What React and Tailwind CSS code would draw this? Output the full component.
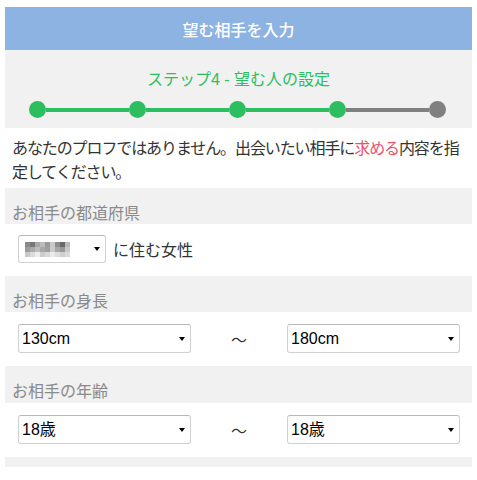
import React from "react";

const jp = { fontFamily: '"Noto Sans CJK JP", "Noto Sans", sans-serif' };
const num = { fontFamily: '"Liberation Sans", "Noto Sans CJK JP", sans-serif' };

// censored prefecture name, shown as a mosaic
const mosaic = [
  ["#8a8a8a", "#777", "#a9a9a9", "#bcbcbc", "#9a9a9a", "#c8c8c8", "#8c8c8c", "#6a6a6a", "#b8b8b8"],
  ["#9c9c9c", "#ababab", "#bdbdbd", "#a8a8a8", "#9e9e9e", "#cacaca", "#a6a6a6", "#999", "#c9c9c9"],
  ["#c9c9c9", "#dadada", "#ececec", "#cdcdcd", "#d8d8d8", "#ebebeb", "#dcdcdc", "#cfcfcf", "#dadada"],
];

const steps = [true, true, true, true, false];

const Arrow = () => (
  <span className="pointer-events-none absolute right-[5px] top-1/2 -translate-y-1/2 w-0 h-0 border-l-[3.5px] border-r-[3.5px] border-t-[4px] border-l-transparent border-r-transparent border-t-black"></span>
);

const SelectBox = ({ value, className = "" }) => (
  <div className={`relative h-[29px] bg-white border border-[#d0d0d0] border-t-[#b8b8b8] rounded-[3px] flex items-center pl-[3px] ${className}`}>
    <span className="text-[16px] text-black leading-none" style={num}>
      {value}
    </span>
    <Arrow />
  </div>
);

const Band = ({ children, className = "h-[36px]" }) => (
  <div className={`bg-[#f1f1f1] px-[7px] pt-3 leading-6 text-[16px] text-[#8a8a8a] ${className}`}>
    {children}
  </div>
);

const RangeRow = ({ from, to }) => (
  <div className="grid grid-cols-[173px_1fr_173px] pl-[13px] pr-[12px] pt-[12px] h-[54px]">
    <SelectBox value={from} />
    <div className="flex items-center justify-center h-[29px] text-[16px] text-[#333]" style={jp}>
      〜
    </div>
    <SelectBox value={to} />
  </div>
);

export default function App() {
  return (
    <div className="w-[477px] h-[480px] bg-white px-[5px] pt-[7px]" style={jp}>
      {/* header */}
      <div className="h-[43px] bg-[#8db3e2] flex items-center justify-center text-white text-[16px] font-medium">
        望む相手を入力
      </div>

      {/* step progress */}
      <div className="bg-[#f1f1f1] h-[78px] pt-[16px]">
        <div className="text-center text-[16px] leading-6 text-[#2dbe60]">
          ステップ<span style={num}>4 - </span>望む人の設定
        </div>
        <div className="flex items-center ml-[24px] mr-[26px] mt-[9px]">
          {steps.map((done, i) => (
            <React.Fragment key={i}>
              {i > 0 && (
                <div className={`flex-1 h-[4px] ${done ? "bg-[#2dbe60]" : "bg-[#808080]"}`}></div>
              )}
              <div className={`w-[17px] h-[17px] rounded-full shrink-0 ${done ? "bg-[#2dbe60]" : "bg-[#808080]"}`}></div>
            </React.Fragment>
          ))}
        </div>
      </div>

      {/* note */}
      <p className="pl-[7px] pt-[7px] pb-[5px] text-[16px] leading-6 text-[#333] tracking-[-1.1px]">
        <span className="whitespace-nowrap">
          あなたのプロフではありません。出会いたい相手に<span className="text-[#f0506e]">求める</span>内容を指
        </span>
        <br />
        定してください。
      </p>

      <Band>お相手の都道府県</Band>
      <div className="h-[52px] pl-[13px] pt-[11px] flex items-start gap-[7px]">
        <div className="relative w-[88px] h-[28px] bg-white border border-[#d0d0d0] border-t-[#b8b8b8] rounded-[3px] flex items-center pl-[6px]">
          <div className="grid grid-cols-[repeat(9,5px)] grid-rows-[repeat(3,5px)]">
            {mosaic.flat().map((c, i) => (
              <div key={i} style={{ backgroundColor: c }}></div>
            ))}
          </div>
          <Arrow />
        </div>
        <span className="h-[28px] flex items-center text-[16px] text-[#333]">に住む女性</span>
      </div>

      <Band>お相手の身長</Band>
      <RangeRow from="130cm" to="180cm" />

      <Band className="h-[37px]">お相手の年齢</Band>
      <RangeRow from="18歳" to="18歳" />

      <div className="bg-[#f1f1f1] h-[10px]"></div>
    </div>
  );
}
